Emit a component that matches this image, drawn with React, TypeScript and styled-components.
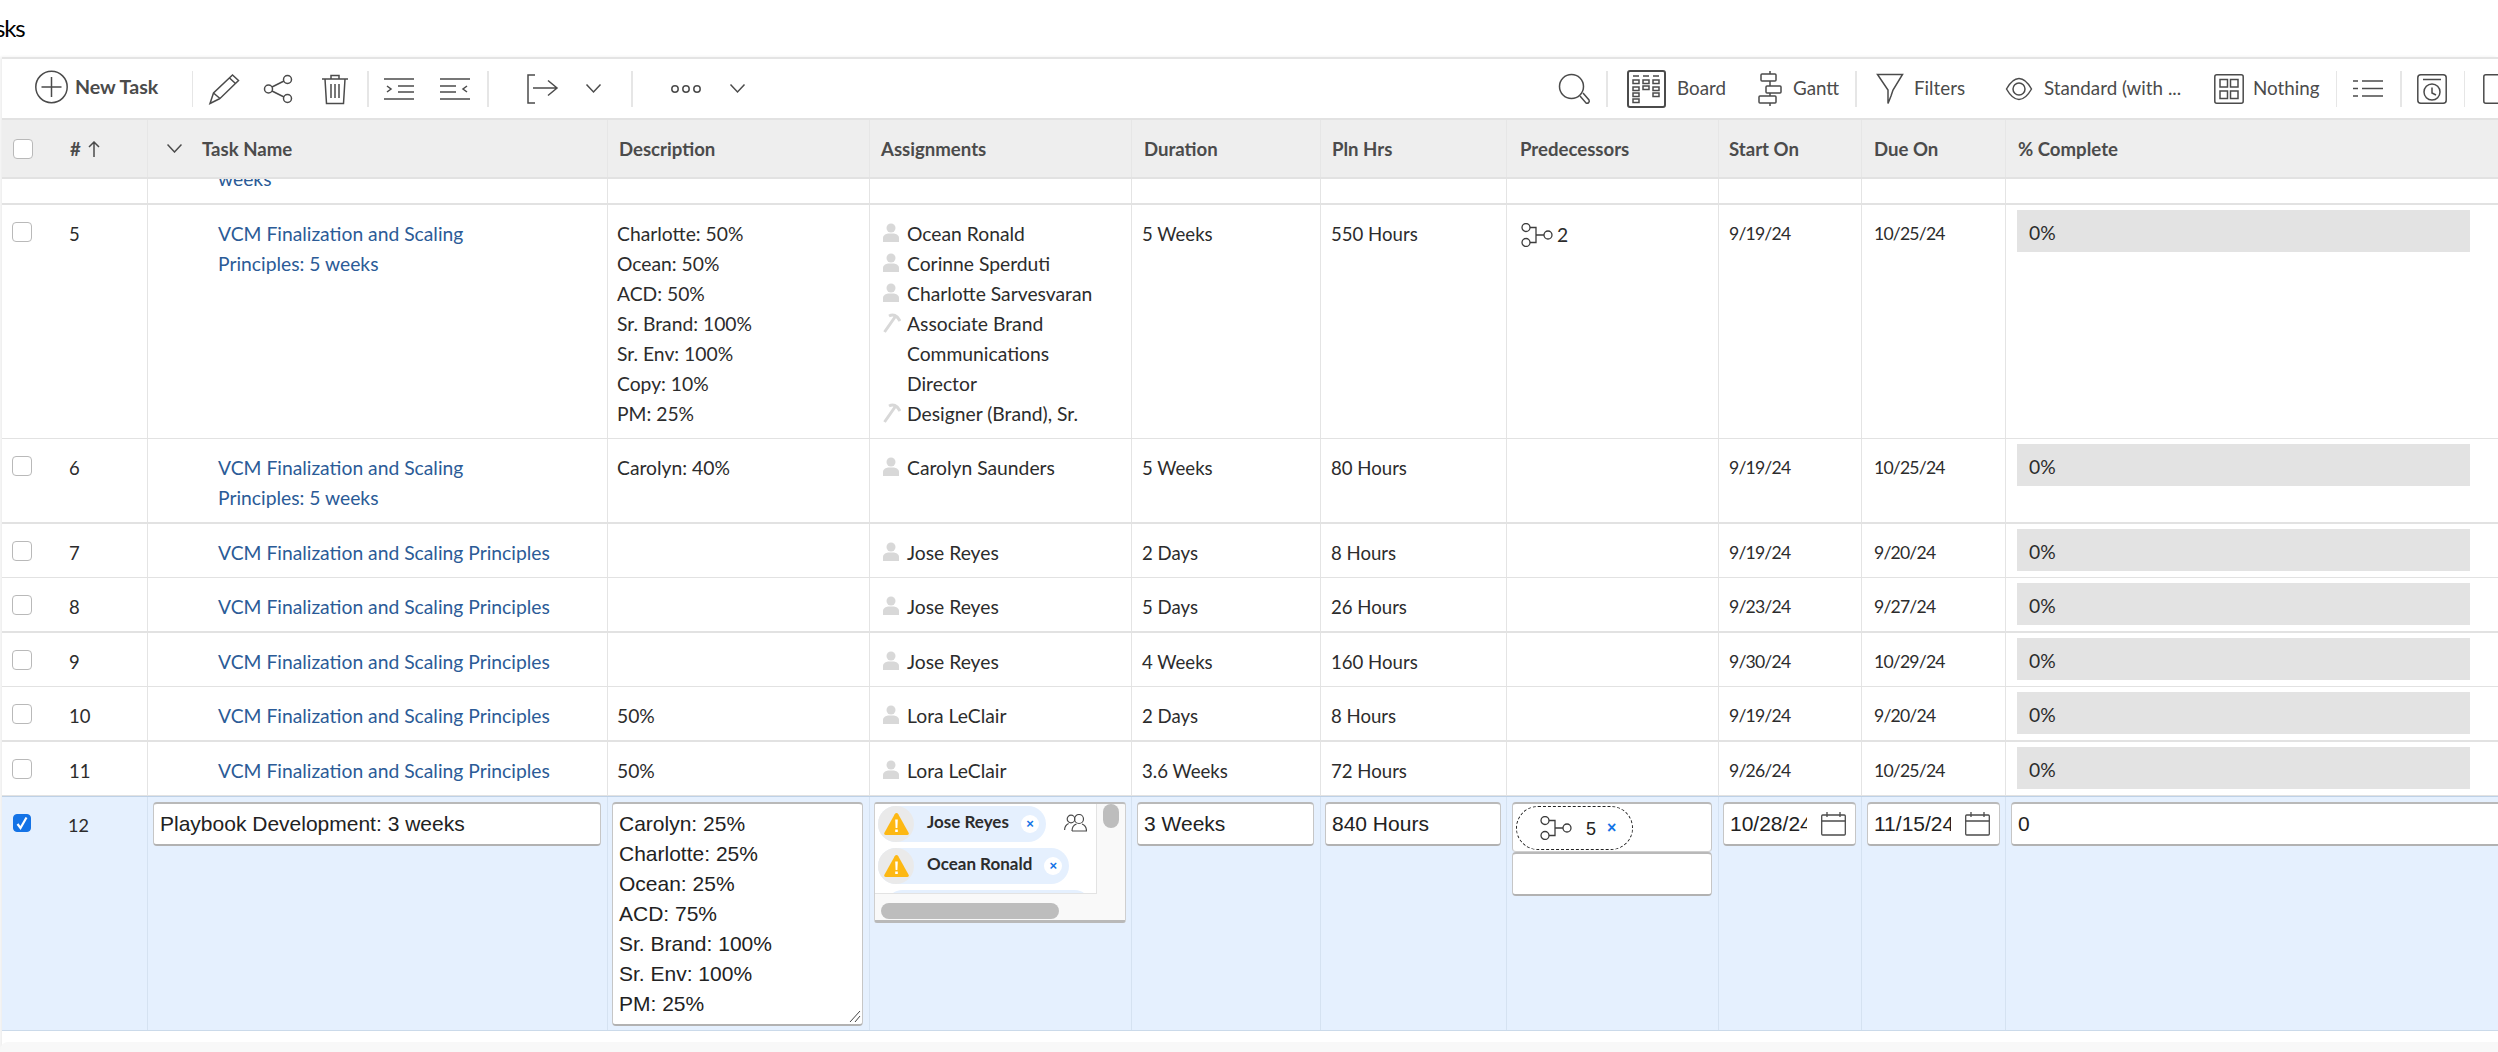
import React from "react";
import styled, { createGlobalStyle } from "styled-components";

const Global = createGlobalStyle`
  html, body { margin: 0; padding: 0; background: #fff; overflow: hidden; }
  * { box-sizing: border-box; }
`;
const SANS = `Lato, "Open Sans", sans-serif`;
const ARIAL = `"Liberation Sans", Arial, sans-serif`;
const COLS = "146px 460px 262px 262px 189px 186px 212px 143px 144px 494px";

const Page = styled.div`
  width: 2498px; height: 1052px; overflow: hidden; display: flex; flex-direction: column;
  font-family: ${SANS}; color: #2c2c2c; background: #fff;
`;
const TitleBar = styled.div`height: 57px; display: flex; align-items: flex-start; overflow: hidden;`;
const Title = styled.h1`margin: 0 0 0 -26px; font-size: 24px; letter-spacing: -1.2px; font-weight: 400; color: #000; line-height: 55px;`;
const Panel = styled.div`
  flex: 1; margin-left: 2px; display: flex; flex-direction: column; min-height: 0;
  border-top: 2px solid #e4e4e4; box-shadow: -2px 0 3px rgba(0,0,0,.07);
`;
const Toolbar = styled.div`height: 59px; flex: none; display: flex; align-items: center; color: #4b4b4b;`;
const Slot = styled.div<{ $ml: number; $w: number }>`
  flex: none; display: flex; align-items: center; justify-content: flex-start;
  margin-left: ${p => p.$ml}px; width: ${p => p.$w}px; white-space: nowrap;
  svg { display: block; overflow: visible; fill: none; stroke: #4b4b4b; stroke-width: 1.5; }
`;
const ToolLabel = styled.span<{ $bold?: boolean }>`
  font-size: ${p => (p.$bold ? 19.6 : 18.8)}px; font-weight: ${p => (p.$bold ? 700 : 400)}; color: #4b4b4b;
  margin-top: ${p => (p.$bold ? -5 : -2)}px;
`;
const Sep = styled.div<{ $ml: number; $w?: number }>`
  flex: none; height: 36px; margin-left: ${p => p.$ml}px; width: ${p => p.$w ?? 2}px; background: #e6e6e6;
`;
const HeaderRow = styled.div`
  display: grid; grid-template-columns: ${COLS}; height: 61px; flex: none; background: #eee;
  border-top: 2px solid #e2e2e2; border-bottom: 2px solid #e2e2e2;
`;
const HeadCell = styled.div<{ $pl?: number }>`
  display: flex; align-items: center; padding-left: ${p => p.$pl ?? 11}px; border-right: 1px solid #e6e6e6;
  font-size: 18.6px; font-weight: 700; color: #4b4b4b; white-space: nowrap;
  svg { flex: none; fill: none; stroke: #4b4b4b; stroke-width: 1.5; }
`;
const HashMark = styled.span`margin: 0 7px 0 37px;`;
const HeadName = styled.span`margin-left: 20px;`;
const Row = styled.div<{ $thick?: boolean }>`
  display: grid; grid-template-columns: ${COLS}; flex: none;
  border-bottom: ${p => (p.$thick ? 2 : 1)}px solid #e2e2e2;
`;
const ClippedRow = styled(Row)`grid-template-rows: 24px; height: 26px; overflow: hidden;`;
const Cell = styled.div<{ $pl?: number }>`
  padding: 14px 0 9px ${p => p.$pl ?? 9}px; border-right: 1px solid #e4e4e4;
  font-size: 19.3px; line-height: 30px; min-width: 0;
`;
const ClippedCell = styled(Cell)`padding: 0 0 9px ${p => p.$pl ?? 9}px; display: flex; align-items: flex-end;`;
const AmountCell = styled(Cell)`font-size: 18.6px;`;
const DateCell = styled(Cell)`font-size: 17.6px; letter-spacing: -0.8px;`;
const SelectCell = styled(Cell)`padding-left: 10px; display: flex; align-items: flex-start; font-size: 18.5px;`;
const Check = styled.div<{ $checked?: boolean; $flat?: boolean }>`
  width: ${p => (p.$checked ? 18 : 20)}px; height: ${p => (p.$checked ? 18 : 20)}px; flex: none;
  margin-top: ${p => (p.$flat ? 0 : 3)}px; border-radius: 4px;
  background: ${p => (p.$checked ? "#1473e6" : "#fff")};
  border: 1px solid ${p => (p.$checked ? "#1473e6" : "#b9b9b9")};
  display: flex; align-items: center; justify-content: center;
`;
const NumText = styled.span`margin-left: 37px;`;
const TaskLink = styled.div`color: #2b5b97; max-width: 300px;`;
const WideLink = styled(TaskLink)`max-width: none; white-space: nowrap;`;
const AssignItem = styled.div`display: flex; align-items: flex-start;`;
const AssignIcon = styled.div`flex: none; width: 28px; height: 30px; padding: 4px 0 0 4px; margin-left: 9px; svg { display: block; }`;
const AssignName = styled.span`max-width: 205px;`;
const PredCell = styled(Cell)`padding: 18px 0 0 14px; display: flex; align-items: flex-start;`;
const PredInner = styled.div`
  display: flex; align-items: center; gap: 4px; line-height: 24px;
  svg { fill: none; stroke: #3c3c3c; stroke-width: 1.3; }
`;
const BarCell = styled(Cell)`padding: 5px 0 0 11px;`;
const Bar = styled.div`width: 453px; height: 42px; background: #e3e3e3; padding: 3px 0 0 12px; display: flex; align-items: center;`;

const EditRow = styled.div`
  display: grid; grid-template-columns: ${COLS}; flex: none; height: 235px; background: #e5f0fe;
  border-top: 1px solid #bed1e6; border-bottom: 1px solid #cbdaea;
`;
const EditCell = styled.div<{ $pl?: number }>`
  padding: 5px 0 0 ${p => p.$pl ?? 5}px; border-right: 1px solid #d5e2f1; min-width: 0; overflow: hidden;
`;
const EditSelect = styled(EditCell)`padding: 17px 0 0 11px; display: flex; align-items: flex-start; font-size: 18px; line-height: 22px;`;
const EditNum = styled.span`margin-left: 37px;`;
const Field = styled.div<{ $w: number; $h?: number }>`
  position: relative; width: ${p => p.$w}px; height: ${p => p.$h ?? 44}px; background: #fff;
  border: 1px solid #c6c6c6; border-top: 2px solid #b9b9b9; border-bottom: 2px solid #b2b2b2; border-radius: 4px;
  font-family: ${ARIAL}; font-size: 21px; line-height: 30px; color: #222; padding: 5px 0 0 6px;
  overflow: hidden; white-space: nowrap;
`;
const MultiField = styled(Field)`white-space: normal; padding-top: 5px;`;
const Grip = styled.svg`position: absolute; right: 1px; bottom: 1px; fill: none; stroke: #444; stroke-width: 1;`;
const DateField = styled(Field)`display: flex; align-items: flex-start;
  svg { flex: none; margin: 3px 0 0 14px; fill: none; stroke: #4b4b4b; stroke-width: 1.3; }`;
const DateText = styled.div`width: 77px; overflow: hidden; flex: none;`;
const AssignBox = styled.div`
  width: 252px; height: 121px; background: #f9f9f9; border: 1px solid #cfcfcf; border-bottom: 3px solid #b9b9b9;
  border-top: 2px solid #bdbdbd; border-radius: 3px; overflow: hidden; display: flex; flex-direction: column;
`;
const AssignTop = styled.div`display: flex; height: 92px; flex: none;`;
const ChipArea = styled.div`
  position: relative; width: 222px; height: 90px; background: #fff; overflow: hidden; padding: 2px 0 0 3px;
  border-right: 1px solid #e3e3e3; border-bottom: 1px solid #e3e3e3; display: flex; flex-direction: column; gap: 6px; flex: none;
`;
const Chip = styled.div<{ $w?: number }>`
  flex: none; height: 36px; border-radius: 18px; background: #e5f0fe; display: flex; align-items: center;
  width: ${p => (p.$w ? `${p.$w}px` : "fit-content")}; padding-right: 7px;
  ${p => (p.$w ? "margin-left:7px;" : "")}
`;
const ChipBadge = styled.div`
  width: 36px; height: 36px; border-radius: 50%; background: #eaeaea; flex: none; display: flex; align-items: center; justify-content: center;
`;
const ChipName = styled.span`margin: -5px 0 0 13px; font-size: 17px; font-weight: 700; color: #2c2c2c; white-space: nowrap;`;
const ChipClose = styled.div`
  width: 18px; height: 18px; margin-left: 12px; border-radius: 50%; background: #fff; flex: none; color: #1473e6;
  display: flex; align-items: center; justify-content: center; font-family: ${ARIAL}; font-size: 13px; line-height: 1; font-weight: 700; padding-bottom: 2px;
`;
const GroupIcon = styled.svg`position: absolute; left: 189px; top: 10px; fill: none; stroke: #4b4b4b; stroke-width: 1.2;`;
const VTrack = styled.div`flex: 1; padding: 0 0 0 6px;`;
const VThumb = styled.div`width: 16px; height: 24px; border-radius: 8px; background: #bdbdbd;`;
const HTrack = styled.div`padding: 7px 0 0 6px;`;
const HThumb = styled.div`width: 178px; height: 16px; border-radius: 8px; background: #bdbdbd;`;
const PredStack = styled.div`width: 200px; display: flex; flex-direction: column;`;
const PredBox = styled(Field)`height: 50px; padding: 2px 0 0 3px; border-bottom: 1px solid #cfcfcf; overflow: hidden;`;
const PredBlank = styled(Field)`height: 44px;`;
const PredChip = styled.div`
  width: 117px; height: 44px; border: 1px dashed #222; border-radius: 22px; display: flex; align-items: center; padding-left: 23px;
  font-family: ${ARIAL}; font-size: 18px;
  svg { flex: none; fill: none; stroke: #3c3c3c; stroke-width: 1.3; }
`;
const PredNum = styled.span`margin: 2px 0 0 14px;`;
const PredX = styled.span`margin-left: 11px; color: #1473e6; font-size: 16px; font-weight: 700;`;
const Footer = styled.div`flex: 1; margin-top: 11px; background: #f8f8f8; margin-left: -2px; border-top-left-radius: 8px;`;

const Circle = () => <svg width="33" height="36" viewBox="0 0 33 36"><circle cx="16.5" cy="16" r="15.7"/><path d="M16.5 6v20M6.5 16h20"/></svg>;
const Pencil = () => <svg width="30" height="30" viewBox="0 0 30 30"><path d="M1 29.5 4.5 19 23.5 1l6 5.5L11 24.5zM1 29.5 11 24.5M4.5 19 11 24.5M20.5 4l6 5.5"/></svg>;
const Share = () => <svg width="28" height="28" viewBox="0 0 28 28"><circle cx="23.5" cy="4.5" r="4"/><circle cx="4.5" cy="14" r="4"/><circle cx="23.5" cy="23.5" r="4"/><path d="M8 12 20 6M8 16l12 6"/></svg>;
const Trash = () => <svg width="26" height="30" viewBox="0 0 26 30"><path d="M0 5h26M9 5V1.5h8V5M3 5l1.5 24.5h17L23 5M9 10v14M13 10v14M17 10v14"/></svg>;
const Indent = () => <svg width="30" height="22" viewBox="0 0 30 22"><path d="M0 1h30M14 8h16M14 14h16M0 21h30M3 8l4 3-4 3"/></svg>;
const Outdent = () => <svg width="30" height="22" viewBox="0 0 30 22"><path d="M0 1h30M0 8h16M0 14h16M0 21h30M27 8l-4 3 4 3"/></svg>;
const Bracket = () => <svg width="30" height="30" viewBox="0 0 30 30"><path d="M8 1H1v28h7M6 14h24M21 6.500l9 7.500-9 7.500"/></svg>;
const Chev = () => <svg width="15" height="9" viewBox="0 0 15 9"><path d="M.5 .5 7.500 8 14.500 .5"/></svg>;
const Dots = () => <svg width="30" height="8" viewBox="0 0 30 8"><circle cx="4" cy="4" r="3.200"/><circle cx="15" cy="4" r="3.200"/><circle cx="26" cy="4" r="3.200"/></svg>;
const Search = () => <svg width="31" height="30" viewBox="0 0 31 30"><circle cx="12.500" cy="12.500" r="12"/><path d="M21 22l6 7c2 1 4-1 3-3l-6-7"/></svg>;
const Board = () => <svg width="39" height="38" viewBox="0 0 39 38"><rect x="1" y="1" width="37" height="36" rx="2" strokeWidth="2"/><path d="M6 6h6M16 6h6M26 6h6"/><rect x="6" y="10" width="6" height="3.500"/><rect x="16" y="10" width="6" height="3.500"/><rect x="26" y="10" width="6" height="3.500"/><rect x="6" y="17" width="6" height="3.500"/><rect x="16" y="16" width="6" height="3.500"/><rect x="26" y="17" width="6" height="3.500"/><rect x="6" y="23" width="6" height="3.500"/><rect x="26" y="23" width="6" height="3.500"/><rect x="6" y="29" width="6" height="3.500"/></svg>;
const Gantt = () => <svg width="22" height="35" viewBox="0 0 22 35"><path d="M11 0v3M11 10v5M11 22v3M11 32v3"/><rect x="2" y="3" width="15" height="7" rx="1"/><rect x="7" y="15" width="15" height="7" rx="1"/><rect x="0" y="25" width="17" height="7" rx="1"/></svg>;
const Filter = () => <svg width="26" height="30" viewBox="0 0 26 30"><path d="M.5 .5h25L16 16l-2 6-3 7.500V16z"/></svg>;
const Eye = () => <svg width="26" height="22" viewBox="0 0 26 22"><path d="M.5 11C5 3 9 .5 13 .5S21 3 25.500 11C21 19 17 21.500 13 21.500S5 19 .5 11z"/><circle cx="13" cy="11" r="6"/></svg>;
const Grid4 = () => <svg width="30" height="30" viewBox="0 0 30 30"><rect x=".8" y=".8" width="28.400" height="28.400" rx="2"/><rect x="6" y="5.500" width="7.500" height="7.500"/><rect x="16.500" y="5.500" width="7.500" height="7.500"/><rect x="6" y="17" width="7.500" height="7.500"/><rect x="16.500" y="17" width="7.500" height="7.500"/></svg>;
const ListI = () => <svg width="30" height="17" viewBox="0 0 30 17"><path d="M0 1h5M9 1h21M0 8.500h5M9 8.500h21M0 16h5M9 16h21"/></svg>;
const ClockI = () => <svg width="30" height="30" viewBox="0 0 30 30"><rect x=".8" y=".8" width="28.400" height="28.400" rx="3"/><path d="M6 5.500h18M15 13.500v5.500l4 2"/><circle cx="15" cy="18" r="8"/></svg>;
const Panel1 = () => <svg width="30" height="30" viewBox="0 0 30 30"><rect x=".8" y=".8" width="40" height="28.400" rx="2"/></svg>;
const Person = () => <svg width="16" height="20" viewBox="0 0 16 20" fill="#d8d8d8"><circle cx="8" cy="5" r="4.500"/><path d="M0 19v-4c0-3 3-4 5-4.500h6c2 .5 5 1.500 5 4.500v4z"/></svg>;
const Hammer = () => <svg width="18" height="20" viewBox="0 0 18 20" fill="none" stroke="#d8d8d8" strokeWidth="3"><path d="M1.500 19 12 4M6 3c4-2 8-1 11 5"/></svg>;
const PredI = () => <svg width="32" height="24" viewBox="0 0 32 24"><circle cx="5" cy="4.500" r="4"/><circle cx="5" cy="19.500" r="4"/><circle cx="27" cy="12" r="4"/><path d="M9 4.500h6v15H9M15 12h8"/></svg>;
const Calendar = () => <svg width="25" height="24" viewBox="0 0 25 24"><rect x=".7" y="3" width="23.600" height="20" rx="1"/><path d="M.7 9h23.600M6 0v5M19 0v5"/></svg>;
const Warn = () => <svg width="25" height="22" viewBox="0 0 25 22"><path d="M12.500 0c.8 0 1.300.4 1.800 1.200l10.300 18.500c.6 1.100 0 2.300-1.300 2.300H1.700C.4 22-.2 20.800.4 19.700L10.700 1.200C11.200.4 11.700 0 12.500 0z" fill="#fdb813"/><path d="M11.200 6.500h2.600l-.4 8.500h-1.800zM11.200 16.500h2.600v2.600h-2.600z" fill="#fff"/></svg>;
const CheckMark = () => <svg width="12" height="14" viewBox="0 0 12 14" fill="none" stroke="#fff" strokeWidth="2.200"><path d="M1.500 8 4.500 12 10.500 1.500"/></svg>;
const UpArrow = () => <svg width="12" height="16" viewBox="0 0 12 16"><path d="M6 16V1M1 6l5-5 5 5"/></svg>;

type Assign = { name: string; role?: boolean };
type RowData = {
  n: number; name: string; wrap?: boolean; desc?: string[]; assigns: Assign[]; dur: string; hrs: string;
  pred?: string; start: string; due: string; thick?: boolean;
};
const VCM = "VCM Finalization and Scaling Principles";
const rows: RowData[] = [
  { n: 5, name: "VCM Finalization and Scaling Principles: 5 weeks", wrap: true,
    desc: ["Charlotte: 50%", "Ocean: 50%", "ACD: 50%", "Sr. Brand: 100%", "Sr. Env: 100%", "Copy: 10%", "PM: 25%"],
    assigns: [{ name: "Ocean Ronald" }, { name: "Corinne Sperduti" }, { name: "Charlotte Sarvesvaran" }, { name: "Associate Brand Communications Director", role: true }, { name: "Designer (Brand), Sr.", role: true }],
    dur: "5 Weeks", hrs: "550 Hours", pred: "2", start: "9/19/24", due: "10/25/24" },
  { n: 6, name: "VCM Finalization and Scaling Principles: 5 weeks", wrap: true, desc: ["Carolyn: 40%"], assigns: [{ name: "Carolyn Saunders" }], dur: "5 Weeks", hrs: "80 Hours", start: "9/19/24", due: "10/25/24", thick: true },
  { n: 7, name: VCM, assigns: [{ name: "Jose Reyes" }], dur: "2 Days", hrs: "8 Hours", start: "9/19/24", due: "9/20/24" },
  { n: 8, name: VCM, assigns: [{ name: "Jose Reyes" }], dur: "5 Days", hrs: "26 Hours", start: "9/23/24", due: "9/27/24", thick: true },
  { n: 9, name: VCM, assigns: [{ name: "Jose Reyes" }], dur: "4 Weeks", hrs: "160 Hours", start: "9/30/24", due: "10/29/24" },
  { n: 10, name: VCM, desc: ["50%"], assigns: [{ name: "Lora LeClair" }], dur: "2 Days", hrs: "8 Hours", start: "9/19/24", due: "9/20/24", thick: true },
  { n: 11, name: VCM, desc: ["50%"], assigns: [{ name: "Lora LeClair" }], dur: "3.6 Weeks", hrs: "72 Hours", start: "9/26/24", due: "10/25/24" },
];
const editDesc = ["Carolyn: 25%", "Charlotte: 25%", "Ocean: 25%", "ACD: 75%", "Sr. Brand: 100%", "Sr. Env: 100%", "PM: 25%"];
const heads: [string, number][] = [["Description", 11], ["Assignments", 11], ["Duration", 12], ["Pln Hrs", 11], ["Predecessors", 13], ["Start On", 10], ["Due On", 12], ["% Complete", 12]];

export default function App() {
  return (
    <Page>
      <Global />
      <TitleBar><Title>Tasks</Title></TitleBar>
      <Panel>
        <Toolbar>
          <Slot $ml={33} $w={33}><Circle /></Slot>
          <Slot $ml={7} $w={110}><ToolLabel $bold>New Task</ToolLabel></Slot>
          <Sep $ml={7} $w={1} />
          <Slot $ml={16} $w={30}><Pencil /></Slot>
          <Slot $ml={25} $w={28}><Share /></Slot>
          <Slot $ml={30} $w={26}><Trash /></Slot>
          <Sep $ml={19} />
          <Slot $ml={15} $w={30}><Indent /></Slot>
          <Slot $ml={26} $w={30}><Outdent /></Slot>
          <Sep $ml={17} />
          <Slot $ml={38} $w={30}><Bracket /></Slot>
          <Slot $ml={29} $w={15}><Chev /></Slot>
          <Sep $ml={30} />
          <Slot $ml={38} $w={30}><Dots /></Slot>
          <Slot $ml={29} $w={15}><Chev /></Slot>
          <Slot $ml={814} $w={31}><Search /></Slot>
          <Sep $ml={16} />
          <Slot $ml={19} $w={39}><Board /></Slot>
          <Slot $ml={11} $w={61}><ToolLabel>Board</ToolLabel></Slot>
          <Slot $ml={21} $w={22}><Gantt /></Slot>
          <Slot $ml={12} $w={50}><ToolLabel>Gantt</ToolLabel></Slot>
          <Sep $ml={12} />
          <Slot $ml={20} $w={26}><Filter /></Slot>
          <Slot $ml={11} $w={61}><ToolLabel>Filters</ToolLabel></Slot>
          <Slot $ml={31} $w={26}><Eye /></Slot>
          <Slot $ml={12} $w={160}><ToolLabel>Standard (with ...</ToolLabel></Slot>
          <Slot $ml={10} $w={30}><Grid4 /></Slot>
          <Slot $ml={9} $w={75}><ToolLabel>Nothing</ToolLabel></Slot>
          <Sep $ml={8} $w={1} />
          <Slot $ml={16} $w={30}><ListI /></Slot>
          <Sep $ml={17} />
          <Slot $ml={15} $w={30}><ClockI /></Slot>
          <Sep $ml={17} $w={1} />
          <Slot $ml={18} $w={30}><Panel1 /></Slot>
        </Toolbar>
        <HeaderRow>
          <HeadCell $pl={11}>
            <Check $flat />
            <HashMark>#</HashMark>
            <UpArrow />
          </HeadCell>
          <HeadCell $pl={19}>
            <Chev />
            <HeadName>Task Name</HeadName>
          </HeadCell>
          {heads.map(([h, pl]) => <HeadCell key={h} $pl={pl}>{h}</HeadCell>)}
        </HeaderRow>
        <ClippedRow $thick>
          <ClippedCell />
          <ClippedCell $pl={70}><TaskLink>weeks</TaskLink></ClippedCell>
          <ClippedCell /><ClippedCell /><ClippedCell /><ClippedCell /><ClippedCell /><ClippedCell /><ClippedCell /><ClippedCell />
        </ClippedRow>
        {rows.map(r => (
          <Row key={r.n} $thick={r.thick}>
            <SelectCell><Check /><NumText>{r.n}</NumText></SelectCell>
            <Cell $pl={70}>{r.wrap ? <TaskLink>{r.name}</TaskLink> : <WideLink>{r.name}</WideLink>}</Cell>
            <Cell>{r.desc?.map(d => <div key={d}>{d}</div>)}</Cell>
            <Cell $pl={0}>
              {r.assigns.map(a => (
                <AssignItem key={a.name}>
                  <AssignIcon>{a.role ? <Hammer /> : <Person />}</AssignIcon>
                  <AssignName>{a.name}</AssignName>
                </AssignItem>
              ))}
            </Cell>
            <AmountCell $pl={10}>{r.dur}</AmountCell>
            <AmountCell $pl={10}>{r.hrs}</AmountCell>
            {r.pred ? <PredCell><PredInner><PredI />{r.pred}</PredInner></PredCell> : <Cell />}
            <DateCell $pl={10}>{r.start}</DateCell>
            <DateCell $pl={12}>{r.due}</DateCell>
            <BarCell><Bar>0%</Bar></BarCell>
          </Row>
        ))}
        <EditRow>
          <EditSelect><Check $checked $flat><CheckMark /></Check><EditNum>12</EditNum></EditSelect>
          <EditCell><Field $w={448}>Playbook Development: 3 weeks</Field></EditCell>
          <EditCell $pl={4}><MultiField $w={251} $h={224}>
            {editDesc.map(d => <div key={d}>{d}</div>)}
            <Grip width="14" height="14" viewBox="0 0 14 14"><path d="M3 13 13 2M8 13l5-6" /></Grip>
          </MultiField></EditCell>
          <EditCell $pl={4}>
            <AssignBox>
              <AssignTop>
                <ChipArea>
                  <Chip><ChipBadge><Warn /></ChipBadge><ChipName>Jose Reyes</ChipName><ChipClose>×</ChipClose></Chip>
                  <Chip><ChipBadge><Warn /></ChipBadge><ChipName>Ocean Ronald</ChipName><ChipClose>×</ChipClose></Chip>
                  <Chip $w={207} />
                  <GroupIcon width="23" height="18" viewBox="0 0 23 18"><circle cx="7" cy="5" r="3.800" /><circle cx="15" cy="5" r="4.500" /><path d="M.6 16c0-4 2-5.500 4-6.500M8 17h14.500c0-4-2-6-4.500-7M8 17c0-4 1.500-6 4.500-7" /></GroupIcon>
                </ChipArea>
                <VTrack><VThumb /></VTrack>
              </AssignTop>
              <HTrack><HThumb /></HTrack>
            </AssignBox>
          </EditCell>
          <EditCell><Field $w={177}>3 Weeks</Field></EditCell>
          <EditCell $pl={4}><Field $w={176}>840 Hours</Field></EditCell>
          <EditCell><PredStack>
              <PredBox $w={200}>
                <PredChip><PredI />
                  <PredNum>5</PredNum><PredX>×</PredX>
                </PredChip>
              </PredBox>
              <PredBlank $w={200} />
            </PredStack>
          </EditCell>
          <EditCell $pl={4}><DateField $w={133}><DateText>10/28/24</DateText><Calendar /></DateField></EditCell>
          <EditCell><DateField $w={133}><DateText>11/15/24</DateText><Calendar /></DateField></EditCell>
          <EditCell><Field $w={600}>0</Field></EditCell>
        </EditRow>
        <Footer />
      </Panel>
    </Page>
  );
}
